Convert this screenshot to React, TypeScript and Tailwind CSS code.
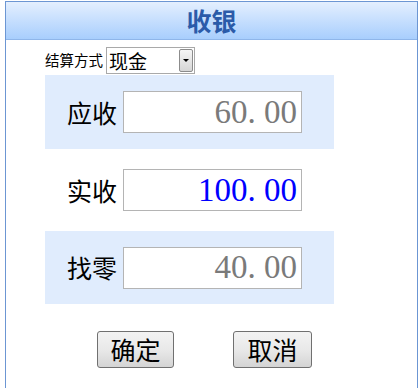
import React from "react";

const cjk = { fontFamily: '"Noto Sans CJK SC", "Noto Sans", sans-serif' };

function Num({ v, color }: { v: string; color: string }) {
  const [a, b] = v.split(".");
  return (
    <span
      className="text-[33px] leading-none whitespace-nowrap"
      style={{ fontFamily: '"Liberation Serif", serif', color }}
    >
      {a}
      <span className="inline-block w-[0.5em]">.</span>
      {b}
    </span>
  );
}

function Field({ label, value, color, bg, h }: { label: string; value: string; color: string; bg: boolean; h: string }) {
  return (
    <div className={`ml-[39px] w-[289px] ${h} flex items-center pl-[22px] ${bg ? "bg-[#e0ecfd]" : ""}`}>
      <span className="text-[25px] leading-none text-black w-[56px]" style={cjk}>
        {label}
      </span>
      <div className="w-[179px] h-[42px] bg-white border border-[#b4b4b4] flex items-center justify-end pr-[4px]">
        <Num v={value} color={color} />
      </div>
    </div>
  );
}

export default function App() {
  return (
    <div className="w-[419px] h-[388px] bg-white overflow-hidden">
      <div className="ml-[5px] mt-[1px] w-[413px] h-[387px] border-l border-r border-t border-[#6c96d3]">
        <div className="h-[38px] border-b border-[#8fb6ea] bg-gradient-to-b from-[#e4effe] to-[#a8cefd] flex items-center justify-center">
          <span className="text-[25px] font-bold leading-none text-[#2b5ba9]" style={cjk}>
            收银
          </span>
        </div>
        <div className="flex items-center ml-[39px] mt-[7px] h-[27px]">
          <span className="text-[14.5px] leading-none text-black" style={cjk}>
            结算方式
          </span>
          <div className="ml-[3px] w-[89px] h-[27px] border border-[#a9a9a9] bg-white flex items-center justify-between pl-[2px] pr-[1px]">
            <span className="text-[19px] leading-none text-black" style={cjk}>
              现金
            </span>
            <div className="w-[14px] h-[23px] border border-[#8c8c8c] rounded-[2px] bg-gradient-to-b from-[#f5f5f5] to-[#d6d6d6] flex items-center justify-center">
              <div className="w-0 h-0 border-l-[3px] border-r-[3px] border-t-[3px] border-l-transparent border-r-transparent border-t-black" />
            </div>
          </div>
        </div>
        <div className="mt-[1px]">
          <Field label="应收" value="60.00" color="#7a7a7a" bg h="h-[74px]" />
          <Field label="实收" value="100.00" color="#0000ff" bg={false} h="h-[82px]" />
          <Field label="找零" value="40.00" color="#7a7a7a" bg h="h-[73px]" />
        </div>
        <div className="flex mt-[27px] ml-[91px] gap-[59px]">
          <button className="w-[77px] h-[37px] border border-[#707070] rounded-[3px] bg-gradient-to-b from-[#f3f3f3] via-[#e9e9e9] to-[#d4d4d4] text-[25px] leading-none text-black flex items-center justify-center" style={cjk}>
            确定
          </button>
          <button className="w-[79px] h-[37px] border border-[#707070] rounded-[3px] bg-gradient-to-b from-[#f3f3f3] via-[#e9e9e9] to-[#d4d4d4] text-[25px] leading-none text-black flex items-center justify-center" style={cjk}>
            取消
          </button>
        </div>
      </div>
    </div>
  );
}
